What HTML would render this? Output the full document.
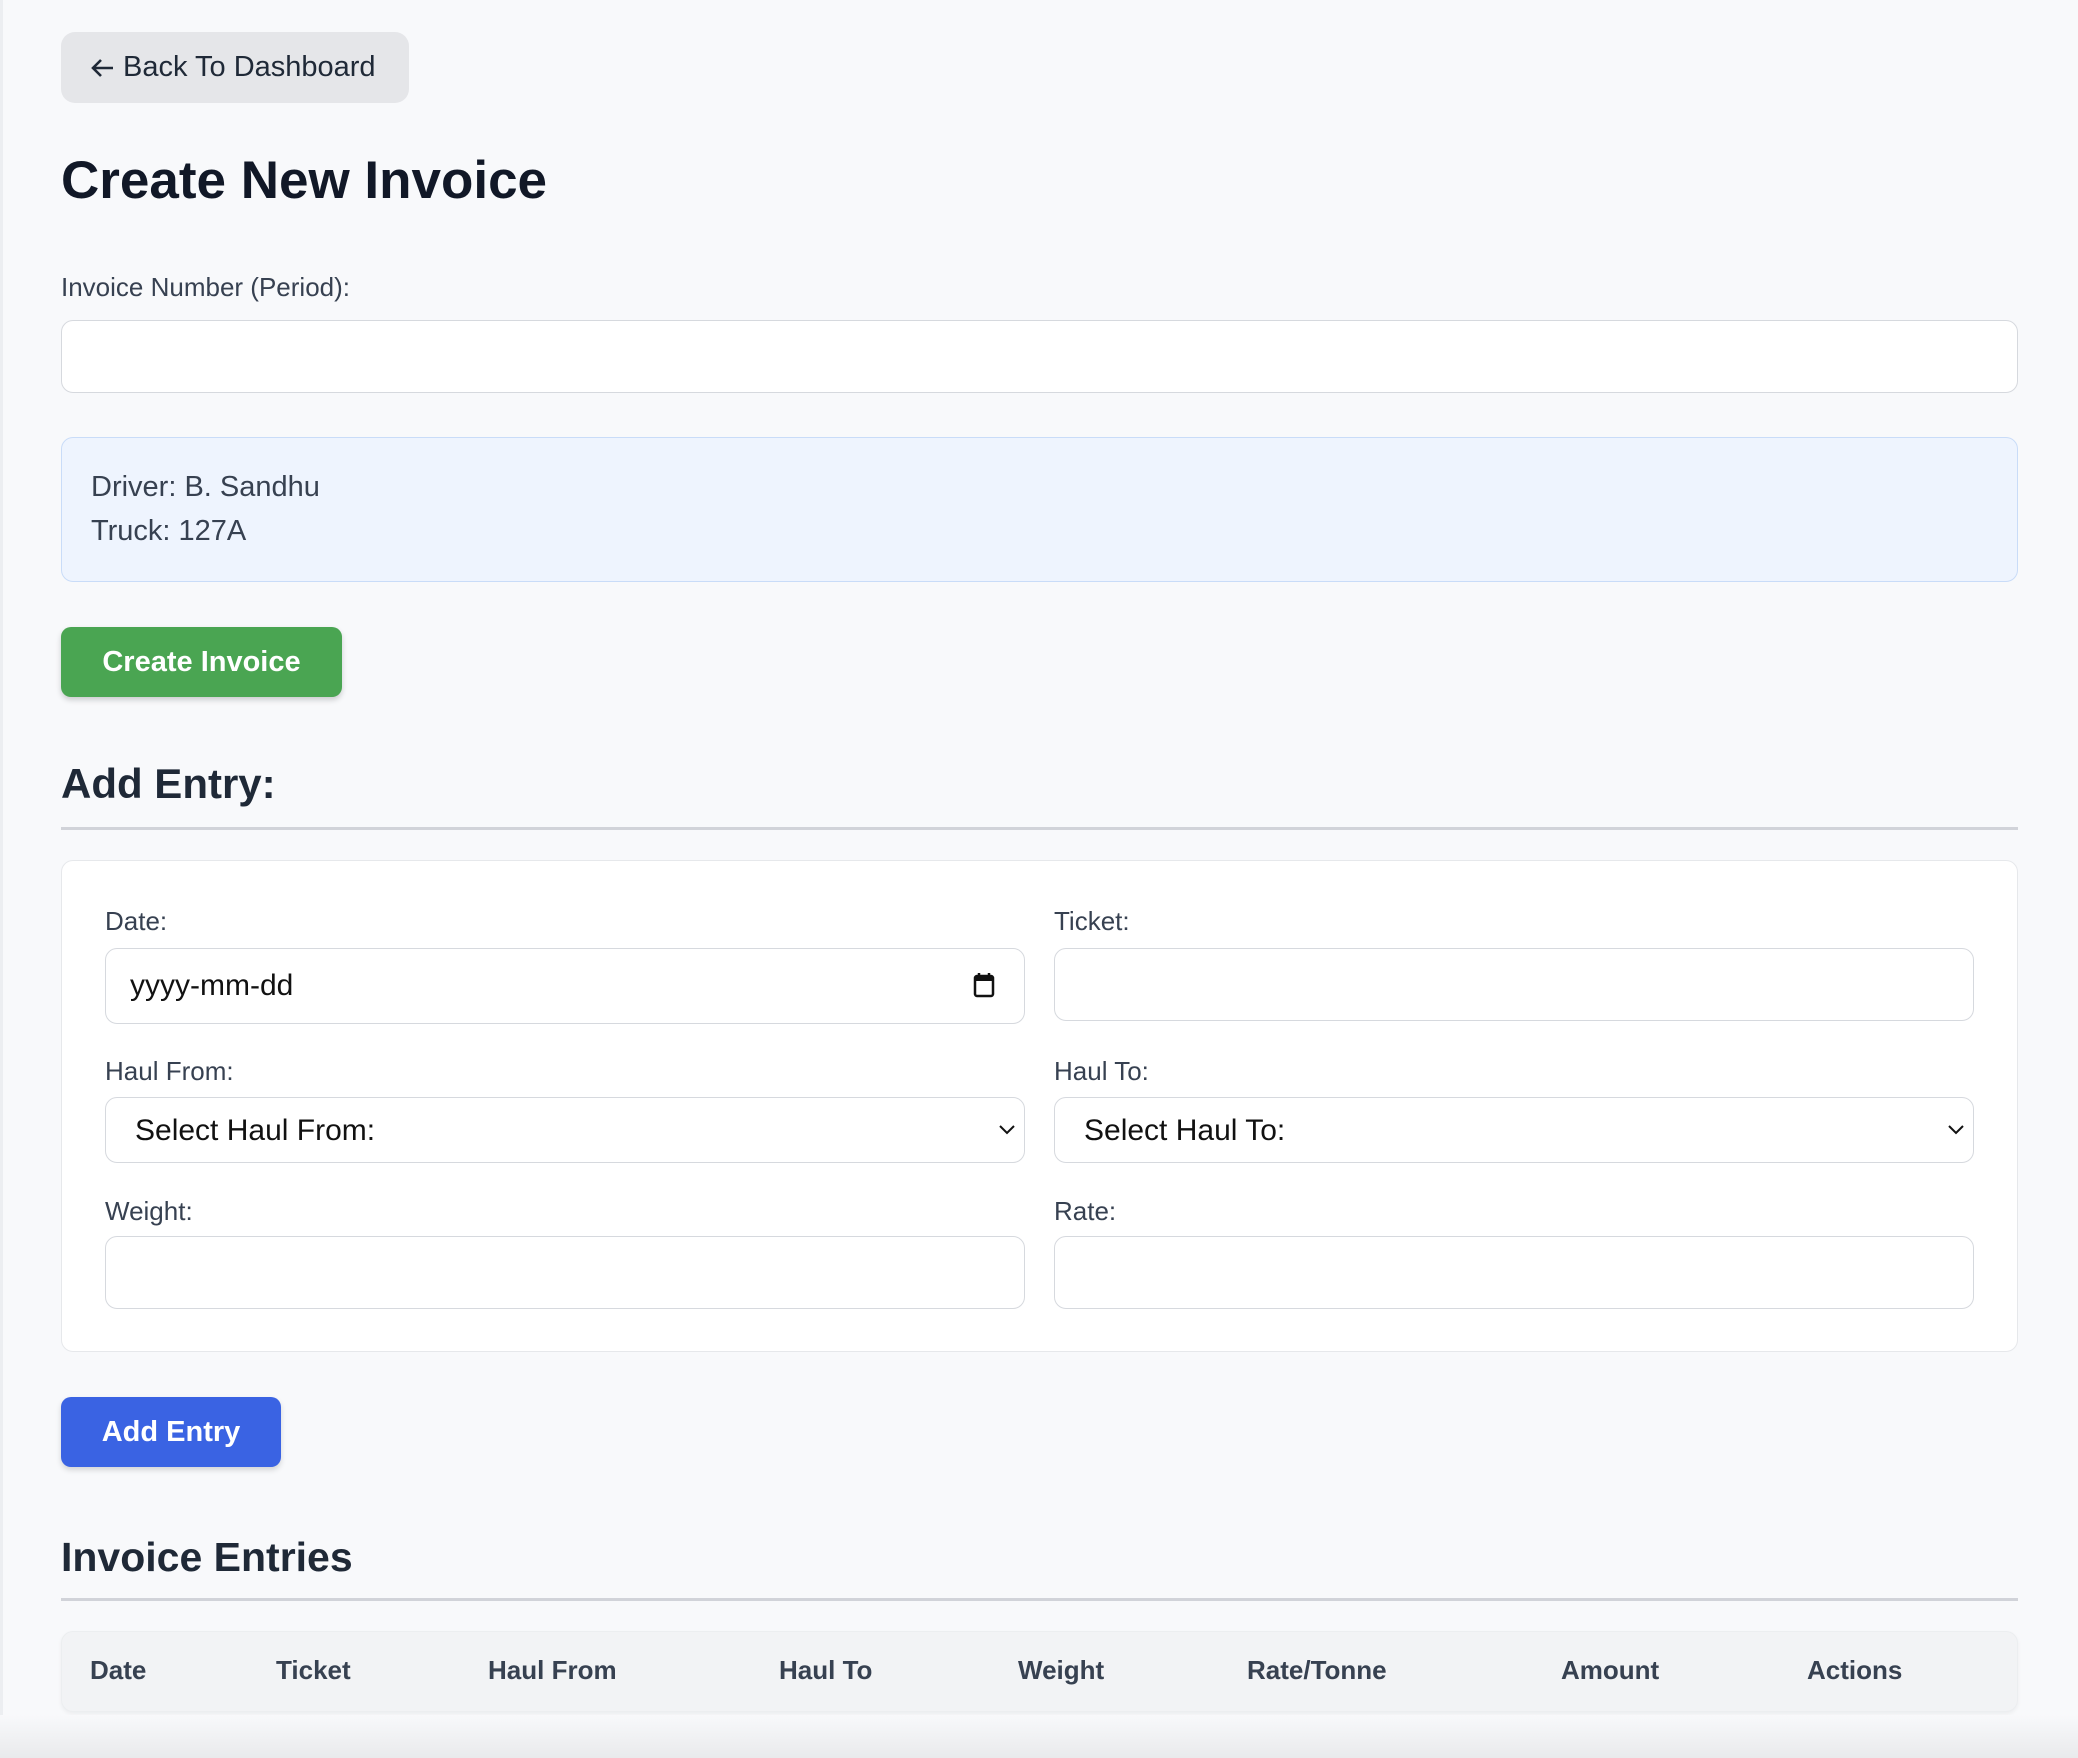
<!DOCTYPE html>
<html><head><meta charset="utf-8"><style>
*{box-sizing:border-box;margin:0;padding:0}
body{width:2078px;height:1758px;background:#f8f9fb;font-family:"Liberation Sans",Arial,sans-serif;position:relative;overflow:hidden;color:#1f2937}
.a{position:absolute}
.btn{position:absolute;border-radius:10px;display:flex;align-items:center;justify-content:center;font-weight:bold;font-size:29px;color:#fff}
.inp{position:absolute;background:#fff;border:1.5px solid #d6d9de;border-radius:12px}
.lbl{position:absolute;font-size:26px;color:#374151}
.th{position:absolute;top:1655px;font-size:26px;font-weight:bold;color:#374151}
</style></head><body>
<div class="a" style="left:0;top:0;width:3px;height:1758px;background:#eceef1"></div>
<div class="a" style="left:61px;top:32px;width:348px;height:71px;background:#e5e6e9;border-radius:14px;font-size:29px;color:#1f2937;display:flex;align-items:center;padding-left:29px">
<svg width="26" height="22" viewBox="0 0 26 22" style="margin-right:7px"><path d="M23 11H4M11 3L3 11L11 19" fill="none" stroke="#1f2937" stroke-width="2.6"/></svg>Back To Dashboard</div>
<div class="a" style="left:61px;top:150px;font-size:53px;font-weight:bold;color:#111827">Create New Invoice</div>
<div class="lbl" style="left:61px;top:272px">Invoice Number (Period):</div>
<div class="inp" style="left:61px;top:320px;width:1957px;height:73px"></div>
<div class="a" style="left:61px;top:437px;width:1957px;height:145px;background:#eef4fe;border:1.5px solid #c9dcf8;border-radius:12px;font-size:29px;color:#374151">
<div class="a" style="left:29px;top:33px">Driver: B. Sandhu</div>
<div class="a" style="left:29px;top:77px">Truck: 127A</div></div>
<div class="btn" style="left:61px;top:627px;width:281px;height:70px;background:#4aa552;box-shadow:0 3px 6px rgba(0,0,0,.18)">Create Invoice</div>
<div class="a" style="left:61px;top:760px;font-size:42px;font-weight:bold;color:#1f2937">Add Entry:</div>
<div class="a" style="left:61px;top:827px;width:1957px;height:3px;background:#d1d3d9"></div>
<div class="a" style="left:61px;top:860px;width:1957px;height:492px;background:#fff;border:1.5px solid #e6e8eb;border-radius:12px"></div>
<div class="lbl" style="left:105px;top:906px">Date:</div>
<div class="lbl" style="left:1054px;top:906px">Ticket:</div>
<div class="inp" style="left:105px;top:948px;width:920px;height:76px"><span class="a" style="left:24px;top:20px;font-size:30px;color:#111">yyyy-mm-dd</span>
<svg class="a" style="left:867px;top:22px" width="22" height="28" viewBox="0 0 22 28"><rect x="2" y="5" width="18" height="20" rx="2" fill="none" stroke="#111" stroke-width="2.5"/><rect x="2" y="5" width="18" height="5" fill="#111"/><path d="M6 2v4M16 2v4" stroke="#111" stroke-width="2.5"/></svg></div>
<div class="inp" style="left:1054px;top:948px;width:920px;height:73px"></div>
<div class="lbl" style="left:105px;top:1056px">Haul From:</div>
<div class="lbl" style="left:1054px;top:1056px">Haul To:</div>
<div class="inp" style="left:105px;top:1097px;width:920px;height:66px"><span class="a" style="left:29px;top:16px;font-size:30px;color:#111">Select Haul From:</span>
<svg class="a" style="left:893px;top:26px" width="16" height="12" viewBox="0 0 16 12"><path d="M1 2l7 7 7-7" fill="none" stroke="#111" stroke-width="2"/></svg></div>
<div class="inp" style="left:1054px;top:1097px;width:920px;height:66px"><span class="a" style="left:29px;top:16px;font-size:30px;color:#111">Select Haul To:</span>
<svg class="a" style="left:893px;top:26px" width="16" height="12" viewBox="0 0 16 12"><path d="M1 2l7 7 7-7" fill="none" stroke="#111" stroke-width="2"/></svg></div>
<div class="lbl" style="left:105px;top:1196px">Weight:</div>
<div class="lbl" style="left:1054px;top:1196px">Rate:</div>
<div class="inp" style="left:105px;top:1236px;width:920px;height:73px"></div>
<div class="inp" style="left:1054px;top:1236px;width:920px;height:73px"></div>
<div class="btn" style="left:61px;top:1397px;width:220px;height:70px;background:#3a63e3;box-shadow:0 3px 6px rgba(0,0,0,.15)">Add Entry</div>
<div class="a" style="left:61px;top:1534px;font-size:41px;font-weight:bold;color:#1f2937">Invoice Entries</div>
<div class="a" style="left:61px;top:1598px;width:1957px;height:3px;background:#d1d3d9"></div>
<div class="a" style="left:61px;top:1631px;width:1957px;height:81px;background:#f2f3f5;border:1.5px solid #eceef0;border-radius:12px;box-shadow:0 2px 4px rgba(0,0,0,.05)"></div>
<div class="th" style="left:90px">Date</div>
<div class="th" style="left:276px">Ticket</div>
<div class="th" style="left:488px">Haul From</div>
<div class="th" style="left:779px">Haul To</div>
<div class="th" style="left:1018px">Weight</div>
<div class="th" style="left:1247px">Rate/Tonne</div>
<div class="th" style="left:1561px">Amount</div>
<div class="th" style="left:1807px">Actions</div>
<div class="a" style="left:0;top:1715px;width:2078px;height:43px;background:linear-gradient(#f8f9fb,#e9eaec)"></div>
</body></html>
